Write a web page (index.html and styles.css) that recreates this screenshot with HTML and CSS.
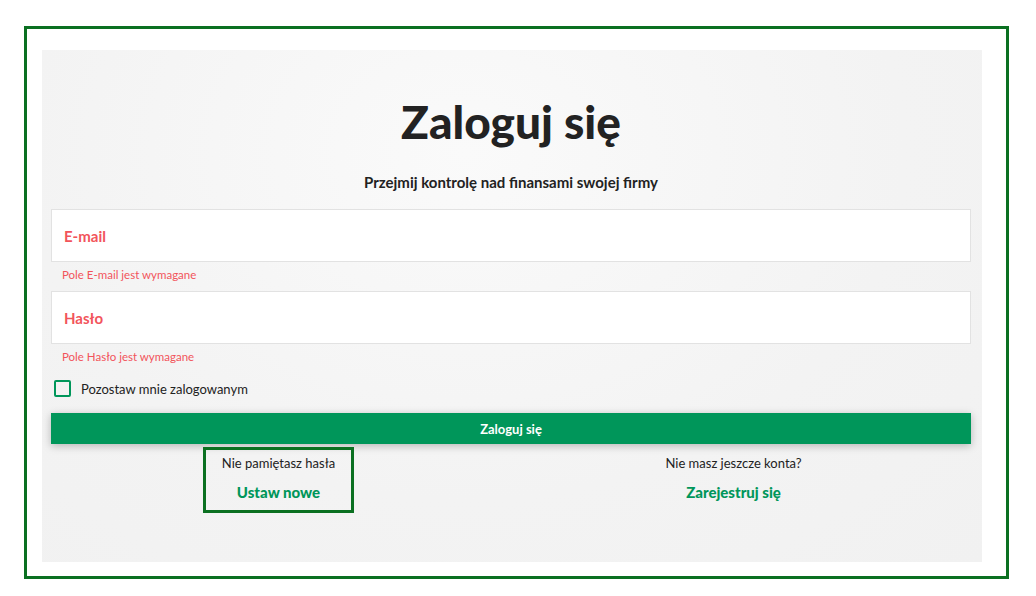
FILE: index.html
```html
<!DOCTYPE html>
<html lang="pl">
<head>
    <meta charset="UTF-8">
    <meta name="viewport" content="width=device-width, initial-scale=1.0">
    <title>Zaloguj się</title>
    <link rel="stylesheet" href="styles.css">
</head>
<body>

<div class="frame">
    <div class="panel">
        <h1>Zaloguj się</h1>
        <p class="lead">Przejmij kontrolę nad finansami swojej firmy</p>

        <input class="field" type="email" placeholder="E-mail">
        <p class="error">Pole E-mail jest wymagane</p>

        <input class="field" type="password" placeholder="Hasło">
        <p class="error">Pole Hasło jest wymagane</p>

        <label class="remember">
            <span class="box"></span>
            Pozostaw mnie zalogowanym
        </label>

        <button class="submit">Zaloguj się</button>

        <div class="links">
            <div class="col">
                <div class="mark">
                    <p>Nie pamiętasz hasła</p>
                    <a href="#">Ustaw nowe</a>
                </div>
            </div>
            <div class="col">
                <p>Nie masz jeszcze konta?</p>
                <a href="#">Zarejestruj się</a>
            </div>
        </div>
    </div>
</div>

</body>
</html>
```

FILE: styles.css
```css
body {
    margin: 0;
    background: #fff;
    font-family: Lato, 'Open Sans', sans-serif;
    color: #222;
}

.frame {
    margin: 26px 27px 0 24px;
    height: 526px;
    border: 3px solid #0b7021;
    padding: 21px 24px 0 15px;
    box-sizing: content-box;
}

.panel {
    height: 512px;
    padding: 0 11px 0 9px;
    background: radial-gradient(ellipse at 45% 20%, #fafafa 0%, #f3f3f3 60%, #f1f1f1 100%);
    overflow: hidden;
}

h1 {
    margin: 0;
    padding-top: 44px;
    font-size: 46px;
    line-height: 56px;
    font-weight: 900;
    text-align: center;
    color: #222;
}

.lead {
    margin: 23px 0 18px;
    font-size: 15px;
    font-weight: 700;
    text-align: center;
    color: #222;
}

.field {
    display: block;
    width: 100%;
    height: 53px;
    box-sizing: border-box;
    border: 1px solid #e2e2e2;
    background: #fff;
    padding: 0 12px;
    font-family: inherit;
    font-size: 15px;
    font-weight: 700;
    outline: none;
}

.field::placeholder {
    color: #f2545b;
}

.error {
    margin: 6px 0 0 11px;
    height: 23px;
    font-size: 11.5px;
    color: #f2545b;
}

.remember {
    display: flex;
    align-items: center;
    gap: 10px;
    margin: 7px 0 0 3px;
    font-size: 13px;
    color: #222;
}

.box {
    width: 17px;
    height: 17px;
    box-sizing: border-box;
    border: 2px solid #00965a;
    border-radius: 2px;
}

.submit {
    display: block;
    width: 100%;
    height: 31px;
    margin-top: 16px;
    border: none;
    background: #00965a;
    color: #fff;
    font-family: inherit;
    font-size: 13px;
    font-weight: 700;
    box-shadow: 0 2px 8px rgba(0, 0, 0, 0.25);
}

.links {
    display: grid;
    grid-template-columns: 1fr 1fr;
    margin: 3px 10px 0 0;
    text-align: center;
}

.col p {
    margin: 8px 0 0;
    font-size: 13px;
    color: #222;
}

.col a {
    display: block;
    margin-top: 12px;
    font-size: 15px;
    font-weight: 900;
    color: #00965a;
    text-decoration: none;
}

.mark {
    display: inline-block;
    width: 145px;
    height: 60px;
    border: 3px solid #0b7021;
}

.mark p {
    margin-top: 5px;
}
```
